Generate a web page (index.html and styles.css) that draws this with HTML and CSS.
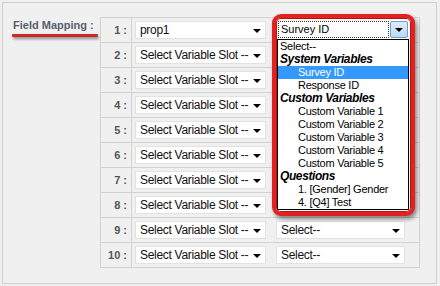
FILE: index.html
```html
<!DOCTYPE html>
<html lang="en">
<head>
    <meta charset="UTF-8">
    <title>Field Mapping</title>
    <link rel="stylesheet" href="styles.css">
</head>
<body>
    <div class="panel">
        <div class="field-label">
            <span>Field Mapping :</span>
            <div class="label-line"></div>
        </div>

        <div class="map-table">
            <div class="map-row">
                <div class="num">1 :</div>
                <div class="cells">
                    <div class="fake-select slot">prop1<i class="arrow"></i></div>
                    <div class="fake-select var"></div>
                </div>
            </div>
            <div class="map-row">
                <div class="num">2 :</div>
                <div class="cells">
                    <div class="fake-select slot">Select Variable Slot --<i class="arrow"></i></div>
                </div>
            </div>
            <div class="map-row">
                <div class="num">3 :</div>
                <div class="cells">
                    <div class="fake-select slot">Select Variable Slot --<i class="arrow"></i></div>
                </div>
            </div>
            <div class="map-row">
                <div class="num">4 :</div>
                <div class="cells">
                    <div class="fake-select slot">Select Variable Slot --<i class="arrow"></i></div>
                </div>
            </div>
            <div class="map-row">
                <div class="num">5 :</div>
                <div class="cells">
                    <div class="fake-select slot">Select Variable Slot --<i class="arrow"></i></div>
                </div>
            </div>
            <div class="map-row">
                <div class="num">6 :</div>
                <div class="cells">
                    <div class="fake-select slot">Select Variable Slot --<i class="arrow"></i></div>
                </div>
            </div>
            <div class="map-row">
                <div class="num">7 :</div>
                <div class="cells">
                    <div class="fake-select slot">Select Variable Slot --<i class="arrow"></i></div>
                </div>
            </div>
            <div class="map-row">
                <div class="num">8 :</div>
                <div class="cells">
                    <div class="fake-select slot">Select Variable Slot --<i class="arrow"></i></div>
                </div>
            </div>
            <div class="map-row">
                <div class="num">9 :</div>
                <div class="cells">
                    <div class="fake-select slot">Select Variable Slot --<i class="arrow"></i></div>
                    <div class="fake-select var">Select--<i class="arrow"></i></div>
                </div>
            </div>
            <div class="map-row">
                <div class="num">10 :</div>
                <div class="cells">
                    <div class="fake-select slot">Select Variable Slot --<i class="arrow"></i></div>
                    <div class="fake-select var">Select--<i class="arrow"></i></div>
                </div>
            </div>
        </div>

        <!-- open dropdown, circled in red -->
        <div class="callout">
            <div class="open-select">
                <div class="open-value"><span>Survey ID</span></div>
                <div class="open-btn"><i class="arrow"></i></div>
            </div>
            <ul class="option-list">
                <li>Select--</li>
                <li class="group">System Variables</li>
                <li class="sub selected">Survey ID</li>
                <li class="sub">Response ID</li>
                <li class="group">Custom Variables</li>
                <li class="sub">Custom Variable 1</li>
                <li class="sub">Custom Variable 2</li>
                <li class="sub">Custom Variable 3</li>
                <li class="sub">Custom Variable 4</li>
                <li class="sub">Custom Variable 5</li>
                <li class="group">Questions</li>
                <li class="sub">1. [Gender] Gender</li>
                <li class="sub">4. [Q4] Test</li>
            </ul>
        </div>
    </div>
</body>
</html>
```

FILE: styles.css
```css
* {
    margin: 0;
    padding: 0;
    box-sizing: border-box;
}

body {
    font-family: 'Liberation Sans', Arial, sans-serif;
    background: #f0f0f0;
    height: 100vh;
    overflow: hidden;
}

.panel {
    position: relative;
    display: flex;
    margin: 2px 0 0 2px;
    width: 435px;
    height: 282px;
    border: 1px solid #cfcfcf;
    padding: 14px 0 0 10px;
}

.field-label {
    width: 87px;
    font-size: 11px;
    font-weight: bold;
    color: #56606c;
    line-height: 14px;
    padding-top: 1px;
}

.label-line {
    margin: 2px 0 0 -1px;
    width: 86px;
    height: 3px;
    background: #cc2a2a;
    border-radius: 1px;
    box-shadow: 1px 2px 3px rgba(0, 0, 0, 0.45);
}

.map-table {
    width: 320px;
    height: 251px;
    border: 1px solid #d2d2d2;
    border-bottom: none;
}

.map-row {
    display: flex;
    height: 25px;
    border-bottom: 1px solid #d2d2d2;
}

.num {
    width: 31px;
    border-right: 1px solid #d2d2d2;
    text-align: right;
    padding-right: 4px;
    font-size: 11px;
    font-weight: bold;
    color: #555;
    line-height: 24px;
}

.cells {
    display: flex;
    align-items: center;
    gap: 10px;
    padding-left: 3px;
}

.fake-select {
    position: relative;
    height: 18px;
    background: #fff;
    border: 1px solid #e2e2e2;
    font-size: 12px;
    letter-spacing: -0.3px;
    color: #111;
    line-height: 16px;
    padding-left: 4px;
    white-space: nowrap;
}

.fake-select.slot {
    width: 131px;
}

.fake-select.var {
    width: 129px;
}

.fake-select .arrow {
    position: absolute;
    right: 4px;
    top: 7px;
}

.arrow {
    display: block;
    width: 0;
    height: 0;
    border-left: 4px solid transparent;
    border-right: 4px solid transparent;
    border-top: 4px solid #000;
}

.callout {
    position: absolute;
    left: 269px;
    top: 11px;
    width: 143px;
    height: 202px;
    background: #fff;
    border: 4px solid #e3221f;
    border-radius: 9px;
    padding: 1px 2px 2px 1px;
    box-shadow: inset 0 0 0 1px #b51414, 2px 3px 4px rgba(0, 0, 0, 0.45);
}

.open-select {
    display: flex;
    height: 20px;
    padding: 2px 1px 1px 1px;
}

.open-value {
    flex: 1;
    border: 1px dotted #333;
    font-size: 11px;
    line-height: 14px;
    padding-left: 2px;
    color: #000;
    margin-right: 1px;
}

.open-btn {
    width: 18px;
    background: linear-gradient(#dcecf9, #bcd9f3);
    border: 1px solid #6f9cc8;
    border-radius: 2px;
    display: flex;
    align-items: center;
    justify-content: center;
}

.option-list {
    list-style: none;
    border: 1px solid #000;
    font-size: 11px;
    letter-spacing: -0.25px;
    color: #000;
    height: 171px;
}

.option-list li {
    height: 13px;
    line-height: 13px;
    padding-left: 2px;
    white-space: nowrap;
}

.option-list .group {
    font-weight: bold;
    font-style: italic;
    font-size: 12px;
    letter-spacing: -0.4px;
}

.option-list .sub {
    padding-left: 20px;
}

.option-list .selected {
    background: #3399ff;
    color: #fff;
}
```
